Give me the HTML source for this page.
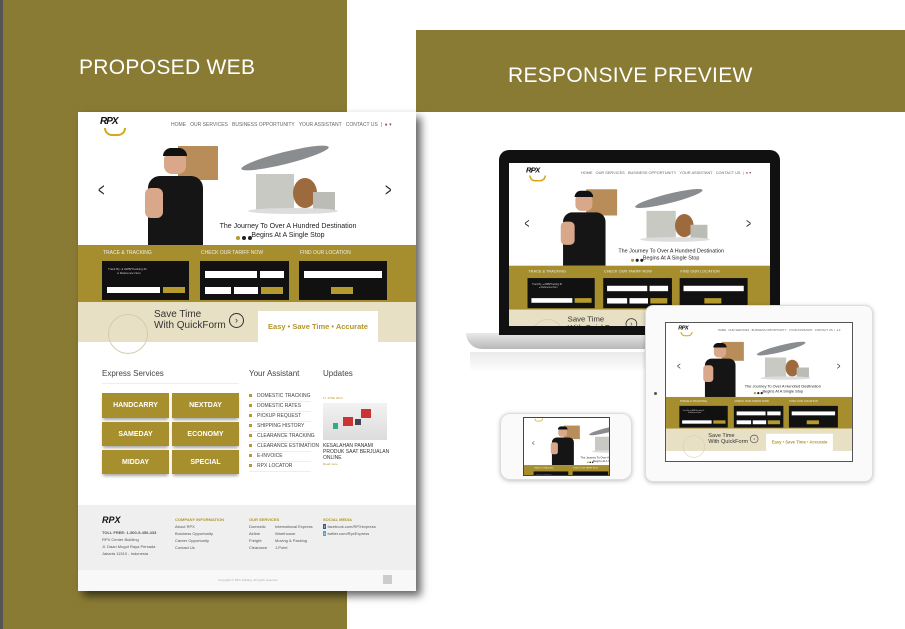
<!DOCTYPE html>
<html><head><meta charset="utf-8"><style>
*{margin:0;padding:0;box-sizing:border-box}
body{width:905px;height:629px;overflow:hidden;background:#fff;font-family:"Liberation Sans",sans-serif;position:relative}
.abs{position:absolute}
#olive{left:0;top:0;width:347px;height:629px;background:#8a7b34;border-left:3px solid #555}
#banner{left:416px;top:30px;width:489px;height:82px;background:#8a7b34}
.title{color:#fff;font-size:21px;letter-spacing:0.3px}
.site{position:absolute;width:338px;height:479px;background:#fff;overflow:hidden;font-family:"Liberation Sans",sans-serif}
.site div{position:absolute}
.nav{font-size:5px;color:#666;white-space:nowrap}
.h5{font-size:5px;color:#eee;white-space:nowrap}
.blk{background:#111}
.btn{background:#a88f2e;color:#fff;font-weight:bold;font-size:7px;display:flex;align-items:center;justify-content:center;box-shadow:0 3px 3px -1px rgba(0,0,0,.35)}
.li{font-size:5px;color:#444;white-space:nowrap;border-bottom:1px solid #eee;width:62px;height:10px;line-height:9px}
.li:before{content:"";display:inline-block;width:3px;height:3px;background:#b59a2e;margin-right:5px;vertical-align:middle}
.ft{font-size:4px;color:#555;white-space:nowrap;line-height:7px}
.fh{font-size:4px;color:#b09428;font-weight:bold;white-space:nowrap}
</style></head><body>
<div class="abs" id="olive"></div>
<div class="abs" id="banner"></div>
<div class="abs title" style="left:79px;top:56px">PROPOSED WEB</div>
<div class="abs title" style="left:508px;top:64px">RESPONSIVE PREVIEW</div>

<div class="abs" style="left:78px;top:112px;width:338px;height:479px;background:#fff;box-shadow:5px 5px 8px rgba(0,0,0,.6)"></div>

<div class="site" id="site" style="left:78px;top:112px">
 <div style="left:22px;top:4px;width:30px;height:20px">
  <div style="left:0;top:0;font:italic bold 10px 'Liberation Sans';color:#111;letter-spacing:-1px">RPX</div>
  <div style="left:4px;top:12px;width:22px;height:8px;border:2px solid #d4a91c;border-top:none;border-radius:0 0 12px 12px"></div>
 </div>
 <div class="nav" style="left:93px;top:10px">HOME &nbsp; OUR SERVICES &nbsp; BUSINESS OPPORTUNITY &nbsp; YOUR ASSISTANT &nbsp; CONTACT US &nbsp;| &nbsp;<span style="color:#c44">●</span> ▾</div>
 <div style="left:0;top:28px;width:338px;height:105px;background:#fff">
  <div style="left:18px;top:40px;font-size:18px;color:#222;transform:scaleX(.6)">&lt;</div>
  <div style="left:305px;top:40px;font-size:18px;color:#222;transform:scaleX(.6)">&gt;</div>
  <div style="left:100px;top:6px;width:40px;height:34px;background:#b98d5a"></div>
  <div style="left:86px;top:10px;width:22px;height:24px;background:#d9a88a;border-radius:10px 10px 8px 8px"></div>
  <div style="left:85px;top:8px;width:24px;height:8px;background:#111;border-radius:10px 10px 0 0"></div>
  <div style="left:70px;top:36px;width:55px;height:69px;background:#151515;border-radius:12px 12px 0 0"></div>
  <div style="left:67px;top:48px;width:18px;height:30px;background:#d9a88a;border-radius:6px"></div>
  <div style="left:162px;top:12px;width:90px;height:12px;background:#8a8d90;border-radius:50%;transform:rotate(-14deg)"></div>
  <div style="left:178px;top:34px;width:38px;height:36px;background:#c9c9c4"></div>
  <div style="left:215px;top:38px;width:24px;height:30px;background:#9c6a3d;border-radius:50%"></div>
  <div style="left:235px;top:52px;width:22px;height:18px;background:#bcbcb6"></div>
  <div style="left:170px;top:68px;width:90px;height:6px;background:#ddd;border-radius:50%"></div>
  <div style="left:120px;top:82px;width:180px;text-align:center;font-size:7px;color:#222;line-height:9px">The Journey To Over A Hundred Destination<br>Begins At A Single Stop</div>
  <div style="left:158px;top:96px;width:4px;height:4px;border-radius:2px;background:#b59a2e"></div>
  <div style="left:164px;top:96px;width:4px;height:4px;border-radius:2px;background:#222"></div>
  <div style="left:170px;top:96px;width:4px;height:4px;border-radius:2px;background:#222"></div>
 </div>
 <div style="left:0;top:133px;width:338px;height:57px;background:#a68d2e">
  <div class="h5" style="left:25px;top:5px">TRACE &amp; TRACKING</div>
  <div class="h5" style="left:123px;top:5px">CHECK OUR TARIFF NOW</div>
  <div class="h5" style="left:222px;top:5px">FIND OUR LOCATION</div>
  <div class="blk" style="left:24px;top:16px;width:87px;height:39px">
   <div style="left:6px;top:6px;font-size:3px;color:#ccc">Track By: ● AWB/Tracking ID<br>&nbsp;&nbsp;&nbsp;&nbsp;&nbsp;&nbsp;&nbsp;&nbsp;&nbsp;&nbsp;&nbsp;● Reference Num</div>
   <div style="left:5px;top:26px;width:53px;height:6px;background:#fff"></div>
   <div style="left:61px;top:26px;width:22px;height:6px;background:#b59a2e"></div>
  </div>
  <div class="blk" style="left:122px;top:16px;width:89px;height:39px">
   <div style="left:5px;top:10px;width:52px;height:7px;background:#fff"></div>
   <div style="left:60px;top:10px;width:24px;height:7px;background:#fff"></div>
   <div style="left:5px;top:26px;width:26px;height:7px;background:#fff"></div>
   <div style="left:34px;top:26px;width:24px;height:7px;background:#fff"></div>
   <div style="left:61px;top:26px;width:22px;height:7px;background:#b59a2e"></div>
  </div>
  <div class="blk" style="left:221px;top:16px;width:88px;height:39px">
   <div style="left:5px;top:10px;width:78px;height:7px;background:#fff"></div>
   <div style="left:32px;top:26px;width:22px;height:7px;background:#b59a2e"></div>
  </div>
 </div>
 <div style="left:0;top:190px;width:338px;height:40px;background:#e7e0c5">
  <div style="left:30px;top:12px;width:40px;height:40px;border:1px solid #d5ccae;border-radius:20px"></div>
  <div style="left:76px;top:7px;font-size:10px;color:#333;line-height:11px">Save Time<br>With QuickForm</div>
  <div style="left:151px;top:11px;width:15px;height:15px;border:1px solid #333;border-radius:8px;font-size:9px;line-height:12px;text-align:center;color:#333">›</div>
  <div style="left:180px;top:9px;width:120px;height:31px;background:#fff;font-size:7.5px;font-weight:bold;color:#b3962a;text-align:center;line-height:31px">Easy • Save Time • Accurate</div>
 </div>
 <div style="left:24px;top:257px;font-size:8px;color:#444">Express Services</div>
 <div style="left:24px;top:271px;width:137px;height:1px;background:#eee"></div>
 <div style="left:171px;top:257px;font-size:8px;color:#444">Your Assistant</div>
 <div style="left:245px;top:257px;font-size:8px;color:#444">Updates</div>
 <div class="btn" style="left:24px;top:281px;width:67px;height:25px">HANDCARRY</div>
 <div class="btn" style="left:94px;top:281px;width:67px;height:25px">NEXTDAY</div>
 <div class="btn" style="left:24px;top:310px;width:67px;height:24px">SAMEDAY</div>
 <div class="btn" style="left:94px;top:310px;width:67px;height:24px">ECONOMY</div>
 <div class="btn" style="left:24px;top:338px;width:67px;height:24px">MIDDAY</div>
 <div class="btn" style="left:94px;top:338px;width:67px;height:24px">SPECIAL</div>
 <div class="li" style="left:171px;top:280px">DOMESTIC TRACKING</div>
 <div class="li" style="left:171px;top:290px">DOMESTIC RATES</div>
 <div class="li" style="left:171px;top:300px">PICKUP REQUEST</div>
 <div class="li" style="left:171px;top:310px">SHIPPING HISTORY</div>
 <div class="li" style="left:171px;top:320px">CLEARANCE TRACKING</div>
 <div class="li" style="left:171px;top:330px">CLEARANCE ESTIMATION</div>
 <div class="li" style="left:171px;top:340px">E-INVOICE</div>
 <div class="li" style="left:171px;top:350px">RPX LOCATOR</div>
 <div style="left:245px;top:284px;font-size:3px;color:#b59a2e">17 JUNE 2014</div>
 <div style="left:245px;top:291px;width:64px;height:37px;background:linear-gradient(#f2f2f2,#dcdcdc)">
  <div style="left:38px;top:6px;width:10px;height:9px;background:#c33"></div>
  <div style="left:20px;top:14px;width:10px;height:9px;background:#c33"></div>
  <div style="left:32px;top:16px;width:6px;height:6px;background:#445"></div>
  <div style="left:10px;top:20px;width:5px;height:6px;background:#3a8"></div>
 </div>
 <div style="left:245px;top:331px;font-size:5px;color:#333;line-height:6px">KESALAHAN PANAMI<br>PRODUK SAAT BERJUALAN<br>ONLINE</div>
 <div style="left:245px;top:350px;font-size:3px;color:#b59a2e">Read more</div>
 <div style="left:0;top:393px;width:338px;height:65px;background:#efefef">
  <div style="left:24px;top:10px;font:italic bold 9px 'Liberation Sans';color:#111">RPX</div>
  <div style="left:24px;top:24px" class="ft"><b>TOLL FREE: 1-500-5-456-433</b><br>RPX Center Building<br>Jl. Daan Mogot Raya Persada<br>Jakarta 11510 - Indonesia</div>
  <div class="fh" style="left:97px;top:12px">COMPANY INFORMATION</div>
  <div class="ft" style="left:97px;top:18px">About RPX<br>Business Opportunity<br>Career Opportunity<br>Contact Us</div>
  <div class="fh" style="left:171px;top:12px">OUR SERVICES</div>
  <div class="ft" style="left:171px;top:18px">Domestic<br>Airline<br>Freight<br>Clearance</div>
  <div class="ft" style="left:197px;top:18px">International Express<br>Warehouse<br>Moving &amp; Packing<br>J-Point</div>
  <div class="fh" style="left:245px;top:12px">SOCIAL MEDIA</div>
  <div class="ft" style="left:245px;top:18px"><span style="background:#3b5998;color:#fff">&nbsp;f&nbsp;</span> facebook.com/RPXexpress<br><span style="background:#4ab;color:#fff">&nbsp;t&nbsp;</span> twitter.com/RpxExpress</div>
 </div>
 <div style="left:0;top:458px;width:338px;height:21px;background:#f8f8f8">
  <div style="left:140px;top:8px;font-size:3px;color:#aaa">Copyright © RPX Holding. All rights reserved</div>
  <div style="left:305px;top:5px;width:9px;height:9px;background:#ccc"></div>
 </div>
</div>

<div class="abs" style="left:466px;top:333px;width:318px;height:16px;background:linear-gradient(#e8e8e8,#b8b8b8);border-radius:0 0 30px 30px"></div>
<div class="abs" style="left:470px;top:352px;width:300px;height:20px;background:linear-gradient(rgba(220,220,220,.6),rgba(255,255,255,0))"></div>
<div class="abs" style="left:499px;top:150px;width:281px;height:185px;background:#111;border-radius:10px 10px 0 0"></div>
<div class="abs" id="lap" style="left:509px;top:163px;width:261px;height:163px;overflow:hidden;background:#fff"></div>
<div class="abs" style="left:645px;top:305px;width:228px;height:177px;background:#fafafa;border:1px solid #ddd;border-radius:8px;box-shadow:0 1px 4px rgba(0,0,0,.25)"></div>
<div class="abs" style="left:654px;top:392px;width:3px;height:3px;background:#555;border-radius:2px"></div>
<div class="abs" id="tab" style="left:665px;top:322px;width:188px;height:140px;overflow:hidden;background:#fff;border:1px solid #555"></div>
<div class="abs" style="left:500px;top:413px;width:132px;height:67px;background:#fafafa;border:1px solid #ddd;border-radius:10px;box-shadow:0 1px 4px rgba(0,0,0,.25)"></div>
<div class="abs" id="ph" style="left:523px;top:417px;width:87px;height:59px;overflow:hidden;background:#fff;border:1px solid #444"></div>

<script>
var s=document.getElementById('site');
function put(id,sc,ty){var c=s.cloneNode(true);c.removeAttribute('id');c.style.left='0';c.style.top=(ty||0)+'px';c.style.transformOrigin='0 0';c.style.transform='scale('+sc+')';document.getElementById(id).appendChild(c);}
put('lap',261/338,0);
put('tab',188/338,0);
put('ph',87/338*1.55,-6);
</script>
</body></html>
